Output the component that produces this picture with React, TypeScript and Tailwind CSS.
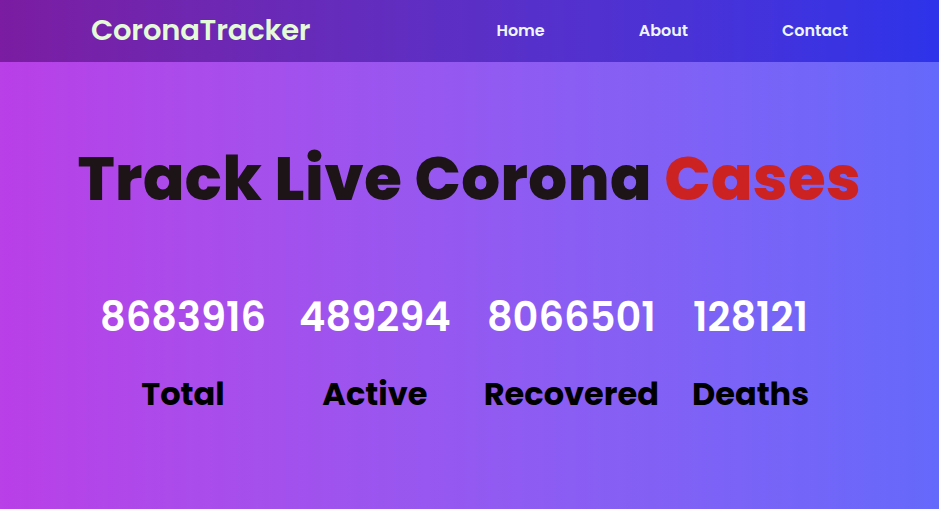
const stats = [
  { value: "8683916", label: "Total" },
  { value: "489294", label: "Active" },
  { value: "8066501", label: "Recovered" },
  { value: "128121", label: "Deaths" },
];

const links = ["Home", "About", "Contact"];

export default function App() {
  return (
    <div
      className="min-h-[509px] w-full bg-gradient-to-r from-[#b93fe7] to-[#6469fb] font-['Poppins','Inter','Liberation_Sans',sans-serif]"
    >
      <nav className="flex h-[62px] items-center bg-gradient-to-r from-[#7b1ca2] to-[#2d33ea] pl-[91px]">
        <h1 className="text-[29px] font-semibold tracking-[-0.2px] text-[#e4fbd8]">CoronaTracker</h1>
        <ul className="ml-auto flex items-center pr-[91px]">
          {links.map((link) => (
            <li key={link} className="ml-[94px] text-[16px] font-semibold text-[#eef6ff]">
              {link}
            </li>
          ))}
        </ul>
      </nav>

      <main className="flex flex-col items-center">
        <h2 className="mt-[80px] text-[61px] font-extrabold leading-[1.2] tracking-[0.5px] text-[#1c1416]">
          Track Live Corona <span className="text-[#cc2222]">Cases</span>
        </h2>

        <div className="mt-[78px] flex gap-[33px] pr-[30px]">
          {stats.map((item) => (
            <div key={item.label} className="flex flex-col items-center">
              <span className="text-[40px] font-semibold leading-[1.2] text-white">{item.value}</span>
              <span className="mt-[34px] text-[32px] font-bold leading-[1.2] text-black">{item.label}</span>
            </div>
          ))}
        </div>
      </main>
    </div>
  );
}
